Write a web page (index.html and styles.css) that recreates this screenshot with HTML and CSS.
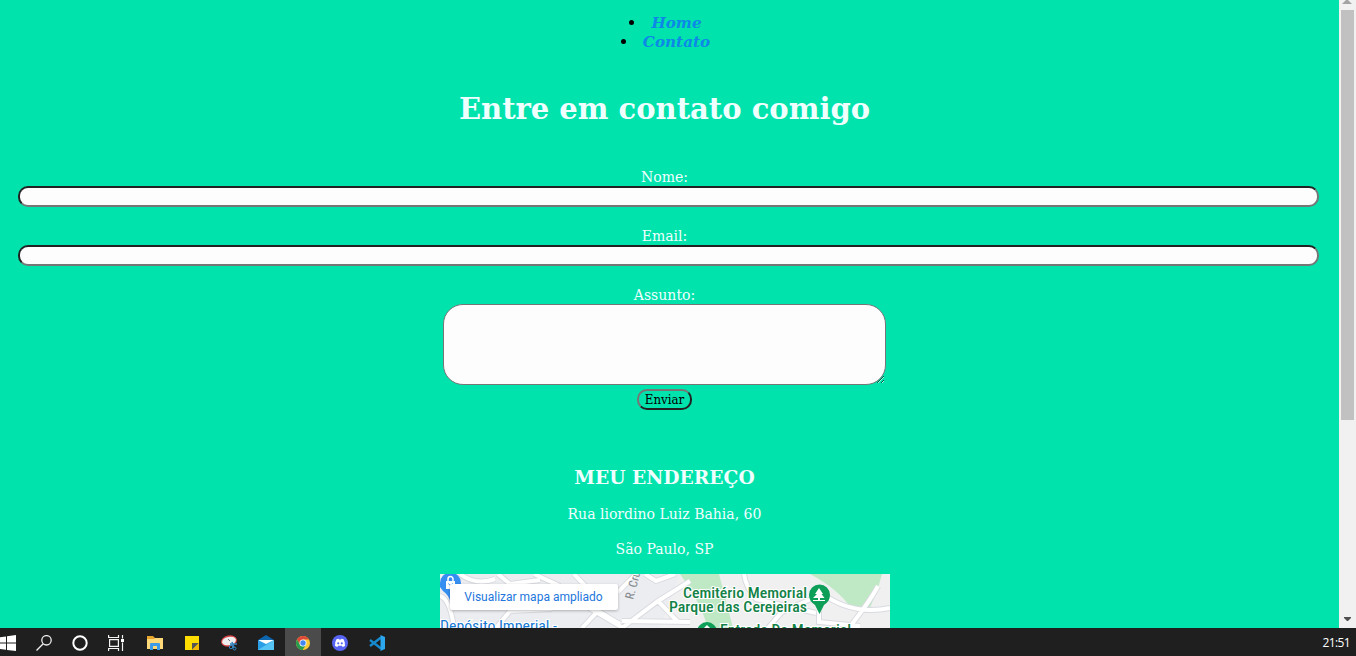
FILE: index.html
```html
<!DOCTYPE html>
<html lang="pt-BR">
<head>
<meta charset="utf-8">
<title>Contato</title>
<link rel="stylesheet" href="styles.css">
</head>
<body>
<div class="viewport">
  <main class="page">
    <ul class="nav">
      <li class="nav-item"><a class="nav-link nav-home">Home</a></li>
      <li class="nav-item"><a class="nav-link nav-contact">Contato</a></li>
    </ul>
    <h1 class="title"><span>Entre em contato comigo</span></h1>
    <form class="form">
      <label class="label">Nome:</label>
      <input class="field" type="text">
      <label class="label">Email:</label>
      <input class="field" type="text">
      <label class="label label-subject">Assunto:</label>
      <textarea class="message"></textarea>
      <button class="send" type="button">Enviar</button>
    </form>
    <h2 class="subtitle"><span>MEU ENDEREÇO</span></h2>
    <p class="address"><span class="street">Rua liordino Luiz Bahia, 60</span></p>
    <p class="address"><span class="city">São Paulo, SP</span></p>
    <div class="map">
      <svg class="map-art" width="450" height="54" viewBox="0 0 450 54">
        <rect width="450" height="54" fill="#f0f0f1"/>
        <path d="M0 0H240L220 54H0z" fill="#ecedf0"/>
        <path d="M240 0H279L293 54H268Q260 27 240 0zM370 0H442L438 14L430 34Q421 37 411 34Q398 15 370 0z" fill="#bfe9c5"/>
        <path d="M20 0Q36 12 55 5M58 0L70 10L100 6M0 22Q10 25 14 54M56 54L70 37L112 35M94 0L120 12M134 0L154 21M112 12L183 54M142 54L158 37L180 50M178 18L196 0M205 0L216 7L235 0M250 7L218 27L182 54M182 47L250 48M218 27L238 48M304 0Q306 14 316 25L376 39M328 54L342 38L380 21M379 37V48L420 52M380 18Q411 42 450 34M438 12Q434 20 424 34L409 54" fill="none" stroke="#d9dbe0" stroke-width="6"/>
        <path d="M20 0Q36 12 55 5M58 0L70 10L100 6M0 22Q10 25 14 54M56 54L70 37L112 35M94 0L120 12M134 0L154 21M112 12L183 54M142 54L158 37L180 50M178 18L196 0M205 0L216 7L235 0M250 7L218 27L182 54M182 47L250 48M218 27L238 48M304 0Q306 14 316 25L376 39M328 54L342 38L380 21M379 37V48L420 52M380 18Q411 42 450 34M438 12Q434 20 424 34L409 54" fill="none" stroke="#fff" stroke-width="4"/>
        <path d="M0 9A10 10 0 0 1 21 9Q21 16 14 20L11 29Q8 20 3 17L0 13z" fill="#368ff0"/>
        <path d="M6 7H15V15H6z" fill="#fff"/><path d="M8 8V5a2.500 2.500 0 0 1 5 0V8" fill="none" stroke="#fff" stroke-width="1.500"/><path d="M8.500 9.500Q10.500 13 12.500 9.500" fill="none" stroke="#368ff0"/>
        <text class="map-street" transform="translate(193 26) rotate(-75)">R. Cruz</text>
        <g class="map-green">
          <text x="243" y="24" textLength="124" lengthAdjust="spacingAndGlyphs">Cemitério Memorial</text>
          <text x="229" y="38" textLength="138" lengthAdjust="spacingAndGlyphs">Parque das Cerejeiras</text>
          <text x="280" y="61" textLength="131" lengthAdjust="spacingAndGlyphs">Entrada Do Memorial</text>
        </g>
        <text class="map-blue" x="0" y="57" textLength="117" lengthAdjust="spacingAndGlyphs">Depósito Imperial -</text>
        <path d="M369 21a10.300 10.300 0 0 1 21 0q0 6-6 10l-4.500 9l-4.500-9q-6-4-6-10z" fill="#0d9f58"/>
        <path d="M379 14l4 6h-1.500l3 4h-4.500v2h5v1h-12v-1h5v-2h-5l4-4h-2z" fill="#fff"/>
        <circle cx="267" cy="58" r="10" fill="#0d9f58"/>
        <path d="M267 51l4 4h-8z" fill="#fff"/>
      </svg>
      <a class="map-button"><span>Visualizar mapa ampliado</span></a>
    </div>
  </main>
  <div class="scrollbar">
    <svg width="17" height="10"><path d="M4 4V3H5V2H6V1H7V0H10V1H11V2H12V3H13V4z" transform="translate(-.5 0)" fill="#a3a3a3"/></svg>
    <div class="thumb"></div>
    <svg class="arrow-down" width="17" height="17"><path d="M5 6H12V7L9 10H8L5 7z" fill="#505050"/></svg>
  </div>
</div>
<footer class="taskbar">
  <div class="task task-first"><svg width="16" height="16" viewBox="0 0 16 16"><path d="M0 2.200L6 1.400V7.500H0zM7 1.200L16 0V7.500H7zM0 8.500H6V14.700L0 13.900zM7 8.500H16V16L7 14.900z" fill="#fff"/></svg></div>
  <div class="task"><svg width="16" height="16" viewBox="0 0 16 16" fill="none" stroke="#eee" stroke-width="1.300"><circle cx="10.500" cy="5.300" r="4.700"/><path d="M7.200 8.800L.5 15.500"/></svg></div>
  <div class="task"><svg width="16" height="16" viewBox="0 0 16 16"><circle cx="8" cy="8" r="6.700" fill="none" stroke="#fff" stroke-width="2"/></svg></div>
  <div class="task"><svg width="16" height="16" viewBox="0 0 16 16" fill="none" stroke="#f2f2f2" stroke-width="1.200"><path d="M.6 0V2.500H10.500V0M.6 16V13.500H10.500V16M1.600 4.600H10.400V11.400H1.600zM14.500 0V3.500M14.500 7.500V16"/><path d="M13 4H16V7H13z" fill="#fff" stroke="none"/></svg></div>
  <div class="task task-folder"><svg width="16" height="16" viewBox="0 0 16 16"><path d="M0 1H6L8 3H16V14H0z" fill="#e7a62c"/><path d="M0 4H7L8 3H16V14H0z" fill="#ffd977"/><path d="M3 9Q3 8 4 8H12Q13 8 13 9V15H10V11H6V15H3z" fill="#3c9be8"/></svg></div>
  <div class="task task-app"><svg width="16" height="16" viewBox="0 0 16 16"><path d="M1 1H15V15H1z" fill="#fd0"/><path d="M8 15V8H15z" fill="#555"/><path d="M8 15L15 8V15z" fill="#f2b900"/></svg></div>
  <div class="task task-app"><svg width="18" height="16" viewBox="0 0 18 16"><ellipse cx="9" cy="6" rx="8" ry="5.500" transform="rotate(-12 9 6)" fill="#d84142"/><ellipse cx="9" cy="6" rx="7" ry="4.200" transform="rotate(-12 9 6)" fill="#eee"/><path d="M8 4L10 6" stroke="#777"/><path d="M10 9L17 9M12 7L14 13" stroke="#3487c2" stroke-width="1.500"/><circle cx="11" cy="12" r="1.700" fill="none" stroke="#3487c2"/><circle cx="14.500" cy="13.500" r="1.500" fill="none" stroke="#3487c2"/></svg></div>
  <div class="task task-app"><svg width="16" height="16" viewBox="0 0 16 16"><path d="M0 5L8 0L16 5V15H0z" fill="#0d65ad"/><path d="M1 5H15V10H1z" fill="#fff"/><path d="M0 5L8 9L16 5V15H0z" fill="#2b9fe6"/><path d="M0 15L16 5V15z" fill="#55c4f4"/></svg></div>
  <div class="task task-app task-active"><svg width="14" height="14" viewBox="0 0 16 16"><circle cx="8" cy="8" r="8" fill="#fcc934"/><path d="M1.100 4A8 8 0 0 1 15 4H8L4.600 10z" fill="#df4939"/><path d="M1.100 4A8 8 0 0 0 7.500 16L11.500 10H4.600z" fill="#259c50"/><circle cx="8" cy="8" r="4" fill="#fff"/><circle cx="8" cy="8" r="3.100" fill="#4285f4"/></svg></div>
  <div class="task task-app"><svg width="16" height="16" viewBox="0 0 16 16"><circle cx="8" cy="8" r="8" fill="#5865f2"/><path d="M4.500 4.300L6.500 3.700L7 4.500H9L9.500 3.700L11.500 4.300Q13.300 7 13 11L10.600 12L9.900 10.800H6.100L5.400 12L3 11Q2.700 7 4.500 4.300z" fill="#fff"/><circle cx="6.200" cy="8.300" r="1.100" fill="#5865f2"/><circle cx="9.800" cy="8.300" r="1.100" fill="#5865f2"/></svg></div>
  <div class="task task-app"><svg width="16" height="16" viewBox="0 0 16 16"><path d="M1 5L12 13.500M1 11L12 2.500" stroke="#168bd0" stroke-width="2.300"/><path d="M11.500 0L16 2V14L11.500 16z" fill="#2ca6ee"/></svg></div>
  <time class="clock">21:51</time>
</footer>
</body>
</html>
```
FILE: styles.css
```css
* { box-sizing: border-box; }
body { margin: 0; width: 1356px; height: 656px; overflow: hidden; font-family: "DejaVu Serif Condensed", "DejaVu Serif", serif; font-stretch: condensed; font-size: 15.600px; }
.viewport { display: flex; height: 628px; background: #00e3ad; overflow: hidden; }
.page { width: 1339px; height: 628px; padding: 13px 10px 0 0; overflow: hidden; color: azure; text-align: center; }
.nav { margin: 0; padding: 0 0 0 22px; list-style: none; color: #000; }
.nav-item { display: flex; justify-content: center; align-items: center; height: 19px; margin-left: -20px; }
.nav-item::before { content: ""; width: 5px; height: 5px; border-radius: 50%; background: #000; margin-right: 17px; }
.nav-link { color: #0d88e6; font-family: "DejaVu Serif", serif; font-stretch: normal; font-size: 15.200px; font-weight: bold; font-style: italic; }
.title { margin: 39px 0 39px; height: 38px; font-family: "DejaVu Serif", serif; font-stretch: normal; font-size: 29px; line-height: 38px; }
.form { display: flex; flex-direction: column; align-items: center; margin: 0; }
.label { height: 19px; line-height: 21px; }
.field { width: 1301px; height: 21px; margin: 0 0 19px 8px; border: 2px inset #767676; border-radius: 10px; background: #fdfdfd; }
.message { width: 443px; height: 81px; margin: 0 0 4px; border: 1px solid #767676; border-radius: 20px; background: #fdfdfd; }
.send { width: 55px; height: 21px; padding: 0; border: 2px outset #767676; border-radius: 10px; background: transparent; color: #000; font-family: "DejaVu Serif Condensed", "DejaVu Serif", serif; font-stretch: condensed; font-size: 13.200px; line-height: 17px; }
.subtitle { margin: 55px 0 15px; height: 24px; font-family: "DejaVu Serif", serif; font-stretch: normal; font-size: 18.700px; line-height: 24px; }
.address { margin: 0 0 16px; height: 19px; line-height: 21px; }
.map { position: relative; width: 450px; height: 54px; margin: 0 auto; overflow: hidden; }
.map-art { display: block; font-family: Roboto, sans-serif; }
.map-street { fill: #80868b; font-size: 12px; }
.map-green, .map-blue { font-size: 14px; font-weight: 500; paint-order: stroke; stroke: #fff; stroke-width: 2px; }
.map-green { fill: #128247; }
.map-blue { fill: #1679d3; font-weight: 400; }
.map-button { position: absolute; left: 10px; top: 10px; width: 168px; height: 26px; background: #fff; border-radius: 2px; box-shadow: 0 1px 3px #0004; color: #2276dc; font: 12px/26px Roboto, sans-serif; }
.scrollbar { display: flex; flex-direction: column; width: 17px; height: 628px; background: #f1f1f1; }
.scrollbar svg { display: block; }
.thumb { width: 13px; height: 410px; margin-left: 2px; background: #c1c1c1; }
.arrow-down { margin-top: auto; }
.taskbar { display: flex; height: 28px; background: #1f1f1f; }
.task { display: flex; width: 36px; height: 28px; align-items: center; justify-content: center; padding-top: 2px; }
.task-first { width: 26px; justify-content: flex-start; }
.task-folder { margin-left: 3px; }
.task-app { margin-left: 1px; }
.task-active { background: #4b4b4b; }
.clock { margin-left: auto; padding-right: 6px; color: #fff; font: 12px/30px "Open Sans", sans-serif; letter-spacing: -.6px; }
```
